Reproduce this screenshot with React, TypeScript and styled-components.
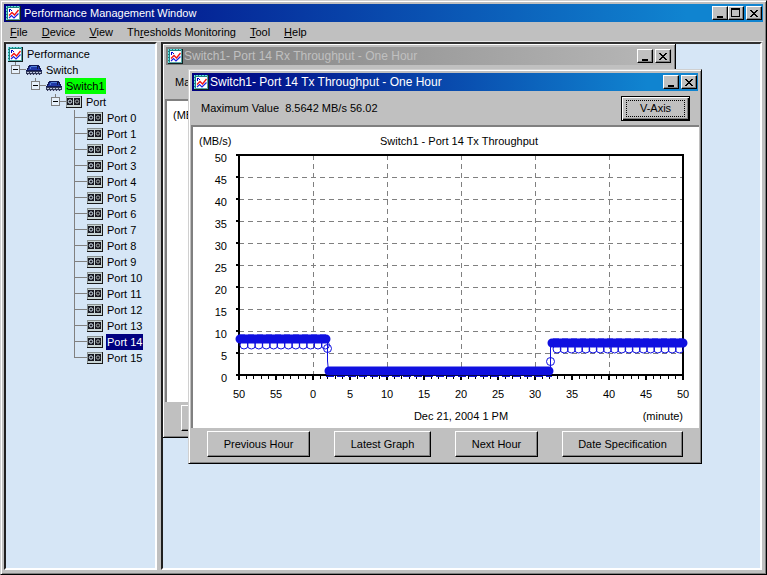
import React from 'react';
import styled, { createGlobalStyle } from 'styled-components';

const GlobalStyle = createGlobalStyle`
  * { box-sizing: border-box; }
  html, body, #root { height: 100%; }
  body { margin: 0; background: #c0c0c0; font: 11px/16px "Liberation Sans", Arial, sans-serif; color: #000; }
  button { font: inherit; color: inherit; }
`;

const Frame = styled.div`
  display: flex;
  flex-direction: column;
  height: 100vh;
  padding: 3px;
  background: #c0c0c0;
  border: 1px solid;
  border-color: #d0d0d0 #000 #000 #d0d0d0;
  box-shadow: inset 1px 1px #fff, inset -1px -1px #808080;
`;

const TitleBar = styled.header<{ $inactive?: boolean }>`
  display: flex;
  align-items: center;
  flex: none;
  height: 18px;
  padding: 0 1px 0 2px;
  gap: 1px;
  color: ${p => (p.$inactive ? '#c0c0c0' : '#fff')};
  background: ${p => (p.$inactive
    ? 'linear-gradient(90deg, #808080, #b8b8b8)'
    : 'linear-gradient(90deg, #000080, #1084d0 90%)')};
`;

const Caption = styled.h1<{ $main?: boolean }>`
  flex: 1;
  margin: 0;
  padding-left: ${p => (p.$main ? '2px' : '0')};
  font-size: ${p => (p.$main ? '11px' : '12px')};
  font-weight: 400;
  white-space: nowrap;
`;

const CaptionButton = styled.button<{ $apart?: boolean }>`
  display: flex;
  align-items: center;
  justify-content: center;
  width: 16px;
  height: 14px;
  margin-left: ${p => (p.$apart ? '1px' : '-1px')};
  padding: 0;
  color: #000;
  background: #c0c0c0;
  border: 1px solid;
  border-color: #fff #000 #000 #fff;
  box-shadow: inset -1px -1px #808080;
`;

const MenuBar = styled.nav`
  display: flex;
  flex: none;
  gap: 14px;
  height: 20px;
  padding: 2px 6px;
  box-shadow: inset 0 -1px #e8e8e8;
`;

const MenuItem = styled.button`
  padding: 0;
  border: 0;
  background: none;
  white-space: nowrap;
`;

const Workspace = styled.main`
  display: grid;
  grid-template-columns: 153px 1fr;
  gap: 4px;
  flex: 1;
  min-height: 0;
  padding: 0 1px 1px 0;
`;

const Pane = styled.section`
  position: relative;
  overflow: hidden;
  min-width: 0;
  background: #d6e6f6;
  border: 2px solid;
  border-color: #303030 #fff #fff #202020;
`;

const Tree = styled.div`
  padding-top: 2px;
`;

const TreeRow = styled.div<{ $depth: number }>`
  display: flex;
  align-items: center;
  height: 16px;
  padding-left: ${p => p.$depth}px;
`;

const TreeLabel = styled.span<{ $mark?: 'green' | 'navy' }>`
  margin-left: 3px;
  padding: 0 1px;
  white-space: nowrap;
  line-height: 16px;
  color: ${p => (p.$mark === 'navy' ? '#fff' : '#000')};
  background: ${p => (p.$mark === 'green' ? '#00ff00' : p.$mark === 'navy' ? '#000080' : 'none')};
`;

const ChildWindow = styled.article<{ $x: number; $y: number }>`
  position: absolute;
  left: ${p => p.$x}px;
  top: ${p => p.$y}px;
  width: 514px;
  padding: 3px;
  background: #c0c0c0;
  border: 1px solid;
  border-color: #d0d0d0 #000 #000 #d0d0d0;
  box-shadow: inset 1px 1px #fff, inset -1px -1px #808080;
`;

const InfoBar = styled.div`
  display: flex;
  align-items: center;
  justify-content: space-between;
  height: 34px;
  padding: 0 8px 0 9px;
  white-space: nowrap;
`;

const PushButton = styled.button<{ $w: number; $default?: boolean }>`
  width: ${p => p.$w}px;
  height: ${p => (p.$default ? '25px' : '26px')};
  padding: ${p => (p.$default ? '2px' : '0')};
  background: #c0c0c0;
  border: 1px solid;
  border-color: ${p => (p.$default ? '#000' : '#fff #000 #000 #fff')};
  box-shadow: ${p => (p.$default
    ? 'inset 1px 1px #fff, inset -1px -1px #000, inset -2px -2px #808080'
    : 'inset -1px -1px #808080')};
  white-space: nowrap;
`;

const FocusRing = styled.span`
  display: flex;
  align-items: center;
  justify-content: center;
  height: 17px;
  margin: 0 2px;
  border: 1px dotted #000;
`;

const ChartWell = styled.div`
  margin: 0 -1px;
  background: #fff;
  border-top: 2px solid #808080;
  border-left: 2px solid #808080;
  svg { display: block; width: 100%; }
`;

const ButtonBar = styled.footer`
  display: flex;
  align-items: center;
  justify-content: space-between;
  height: 32px;
  padding: 0 15px;
`;

function GraphIcon() {
  return (
    <svg width="15" height="15" viewBox="0 0 15 15" aria-hidden="true">
      <g shapeRendering="crispEdges">
        <path d="M0 0h15v15H0z" fill="#102020" />
        <path d="M0 0h14v14H0z" fill="#208080" />
        <path d="M.5 14V.5H14" fill="none" stroke="#60e0e0" strokeDasharray="2 1" />
        <path d="M2 2h11v11H2z" fill="#fff" />
        <path d="M13 1h1v13H1v-1h12z" fill="#58a8a8" />
        <path d="M3 3h1v3H3zM4 3h1v1H4zM5 4h1v1H5z" fill="#0000d0" />
      </g>
      <path d="M3 12L5.500 9.500L8 12L12.500 7.500" fill="none" stroke="#2020e0" strokeWidth="1.2" />
      <path d="M3 9.500L6 6.500L8.500 9L12.500 4" fill="none" stroke="#f01010" strokeWidth="1.3" />
    </svg>
  );
}

function SwitchIcon() {
  return (
    <svg width="16" height="10" viewBox="0 0 16 10" shapeRendering="crispEdges" aria-hidden="true">
      <path d="M3 0h10v1h1v2h1v2h1v3H0V5h1V3h1V1h1z" fill="#101858" />
      <path d="M4 1h8v1h1v2h1v1H2V4h1V2h1z" fill="#2038a8" />
      <path d="M5 1h6v1H5zM4 2h1v2H4z" fill="#5080d8" />
      <path d="M11 1h1v3h-1z" fill="#101840" />
      <path d="M0 6h16v3h-1v1H1V9H0z" fill="#303858" />
      <path d="M1 7h14M2 9h13" stroke="#c0c8e0" strokeDasharray="2 1" />
    </svg>
  );
}

function PortIcon() {
  return (
    <svg width="16" height="12" viewBox="0 0 16 12" aria-hidden="true">
      <g shapeRendering="crispEdges">
        <path d="M0 0h16v12H0z" fill="#181818" />
        <path d="M0 0h15v11H0z" fill="#889090" />
        <path d="M1 1h14v10H1z" fill="#c8d4d4" />
        <path d="M1 2h6v7H1zM8 2h6v7H8z" fill="#181820" />
      </g>
      <circle cx="4" cy="5.500" r="1.700" fill="none" stroke="#d8e8f4" />
      <circle cx="11" cy="5.500" r="1.700" fill="none" stroke="#a8b0b0" />
    </svg>
  );
}

function Branch({ kind }: { kind: 'box' | 'mid' | 'last' }) {
  return (
    <svg width={kind === 'box' ? 15 : 13} height="16" viewBox={kind === 'box' ? '0 0 15 16' : '0 0 13 16'} shapeRendering="crispEdges" aria-hidden="true">
      {kind === 'box' ? (
        <>
          <path d="M4 0h1v4H4zM9 7h6v1H9z" fill="#808080" />
          <path d="M.5 3.500h8v8h-8z" fill="#e6f0fa" stroke="#808080" />
          <path d="M2 7h5v1H2z" fill="#000" />
        </>
      ) : (
        <path d={`M0 0h1v${kind === 'mid' ? 16 : 8}H0zM0 7h13v1H0z`} fill="#808080" />
      )}
    </svg>
  );
}

function Controls({ maximize }: { maximize?: boolean }) {
  return (
    <>
      <CaptionButton aria-label="Minimize">
        <svg width="10" height="10" viewBox="0 0 10 10" shapeRendering="crispEdges"><path d="M2 8h6v2H2z" /></svg>
      </CaptionButton>
      {maximize && (
        <CaptionButton aria-label="Maximize">
          <svg width="10" height="10" viewBox="0 0 10 10" shapeRendering="crispEdges"><path fillRule="evenodd" d="M0 0h9v9H0zM1 2v6h7V2z" /></svg>
        </CaptionButton>
      )}
      <CaptionButton aria-label="Close" $apart>
        <svg width="8" height="7" viewBox="0 0 8 7" shapeRendering="crispEdges">
          <path d="M0 0h2v1h1v1h2V1h1V0h2v1H7v1H6v1H5v1h1v1h1v1h1v1H6V6H5V5H3v1H2v1H0V6h1V5h1V4h1V3H2V2H1V1H0z" />
        </svg>
      </CaptionButton>
    </>
  );
}

const MINUTES = ['50', '55', '0', '5', '10', '15', '20', '25', '30', '35', '40', '45', '50'];
const LEVELS = [50, 45, 40, 35, 30, 25, 20, 15, 10, 5, 0];
const range = (n: number) => Array.from({ length: n }, (_, i) => i);

function Chart({ title }: { title: string }) {
  const left = 46;
  const top = 28;
  const right = 490;
  const base = 248;
  return (
    <svg viewBox="0 0 506 301" fontSize="11" role="img" aria-label={title}>
      <text x="6" y="18">(MB/s)</text>
      <text x="266" y="18" textAnchor="middle">{title}</text>
      <g stroke="#808080" strokeDasharray="5 4" shapeRendering="crispEdges">
        {range(9).map(i => <path key={i} d={`M${left} ${top + 22.5 + i * 22}H${right}`} />)}
        {range(5).map(i => <path key={i} d={`M${left + 74.5 + i * 74} ${top}V${base}`} />)}
      </g>
      <g shapeRendering="crispEdges">
        <path d={`M${left} ${top}H${right}V${base}H${left}z`} fill="none" stroke="#000" strokeWidth="2" />
        {LEVELS.map((v, i) => <path key={v} d={`M${left - 3} ${top + i * 22}h3`} stroke="#000" strokeWidth="2" />)}
        {range(61).map(i => (
          <path key={i} d={`M${left + i * 7.4} ${base}v${i % 5 ? 4 : 5}`} stroke="#000" strokeWidth={i % 5 ? 1 : 2} />
        ))}
      </g>
      <g fill="none" stroke="#1010e0">
        {range(12).map(i => <circle key={i} cx={left + 5 + i * 7.4} cy="218" r="4" />)}
        {range(18).map(i => <circle key={i} cx={364 + i * 7.2} cy="222" r="4" />)}
        <circle cx="134.500" cy="221.500" r="4" />
        <circle cx="357.500" cy="234.500" r="4" />
        <path d="M134.500 212V234L135.500 244M357.500 216V245" />
        <g strokeWidth="9" strokeLinecap="round">
          <path d="M47 212H133M359 216H490M136 244H356" />
        </g>
        <path d="M46 208H133M360 212H490" strokeDasharray="6 3" />
        <path d="M133 249.500H359" strokeDasharray="8 3" />
      </g>
      <path d={`M${left} ${base}H${right}`} stroke="#000" strokeOpacity=".35" shapeRendering="crispEdges" />
      {LEVELS.map((v, i) => <text key={v} x="34" y={top + 7 + i * 22} textAnchor="end">{v}</text>)}
      {MINUTES.map((m, i) => <text key={i} x={left + i * 37} y="271" textAnchor="middle">{m}</text>)}
      <text x="268" y="293" textAnchor="middle">Dec 21, 2004 1 PM</text>
      <text x="490" y="293" textAnchor="end">(minute)</text>
    </svg>
  );
}

function ThroughputWindow({ dir, x, y, inactive }: { dir: string; x: number; y: number; inactive?: boolean }) {
  return (
    <ChildWindow $x={x} $y={y}>
      <TitleBar $inactive={inactive}>
        <GraphIcon />
        <Caption as="h2">{`Switch1- Port 14 ${dir} Throughput - One Hour`}</Caption>
        <Controls />
      </TitleBar>
      <InfoBar>
        <span>Maximum Value&nbsp; 8.5642 MB/s 56.02</span>
        <PushButton $w={69} $default><FocusRing>V-Axis</FocusRing></PushButton>
      </InfoBar>
      <ChartWell><Chart title={`Switch1 - Port 14 ${dir} Throughput`} /></ChartWell>
      <ButtonBar>
        <PushButton $w={103}>Previous Hour</PushButton>
        <PushButton $w={97}>Latest Graph</PushButton>
        <PushButton $w={83}>Next Hour</PushButton>
        <PushButton $w={121}>Date Specification</PushButton>
      </ButtonBar>
    </ChildWindow>
  );
}

export default function App() {
  return (
    <>
      <GlobalStyle />
      <Frame>
        <TitleBar>
          <GraphIcon />
          <Caption $main>Performance Management Window</Caption>
          <Controls maximize />
        </TitleBar>
        <MenuBar>
          <MenuItem><u>F</u>ile</MenuItem>
          <MenuItem><u>D</u>evice</MenuItem>
          <MenuItem><u>V</u>iew</MenuItem>
          <MenuItem>Th<u>r</u>esholds Monitoring</MenuItem>
          <MenuItem><u>T</u>ool</MenuItem>
          <MenuItem><u>H</u>elp</MenuItem>
        </MenuBar>
        <Workspace>
          <Pane aria-label="Devices">
            <Tree>
              <TreeRow $depth={2}><GraphIcon /><TreeLabel>Performance</TreeLabel></TreeRow>
              <TreeRow $depth={5}><Branch kind="box" /><SwitchIcon /><TreeLabel>Switch</TreeLabel></TreeRow>
              <TreeRow $depth={25}><Branch kind="box" /><SwitchIcon /><TreeLabel $mark="green">Switch1</TreeLabel></TreeRow>
              <TreeRow $depth={45}><Branch kind="box" /><PortIcon /><TreeLabel>Port</TreeLabel></TreeRow>
              {range(16).map(i => (
                <TreeRow key={i} $depth={68}>
                  <Branch kind={i === 15 ? 'last' : 'mid'} />
                  <PortIcon />
                  <TreeLabel $mark={i === 14 ? 'navy' : undefined}>{`Port ${i}`}</TreeLabel>
                </TreeRow>
              ))}
            </Tree>
          </Pane>
          <Pane aria-label="Graphs">
            <ThroughputWindow dir="Rx" x={-1} y={-1} inactive />
            <ThroughputWindow dir="Tx" x={25} y={25} />
          </Pane>
        </Workspace>
      </Frame>
    </>
  );
}
